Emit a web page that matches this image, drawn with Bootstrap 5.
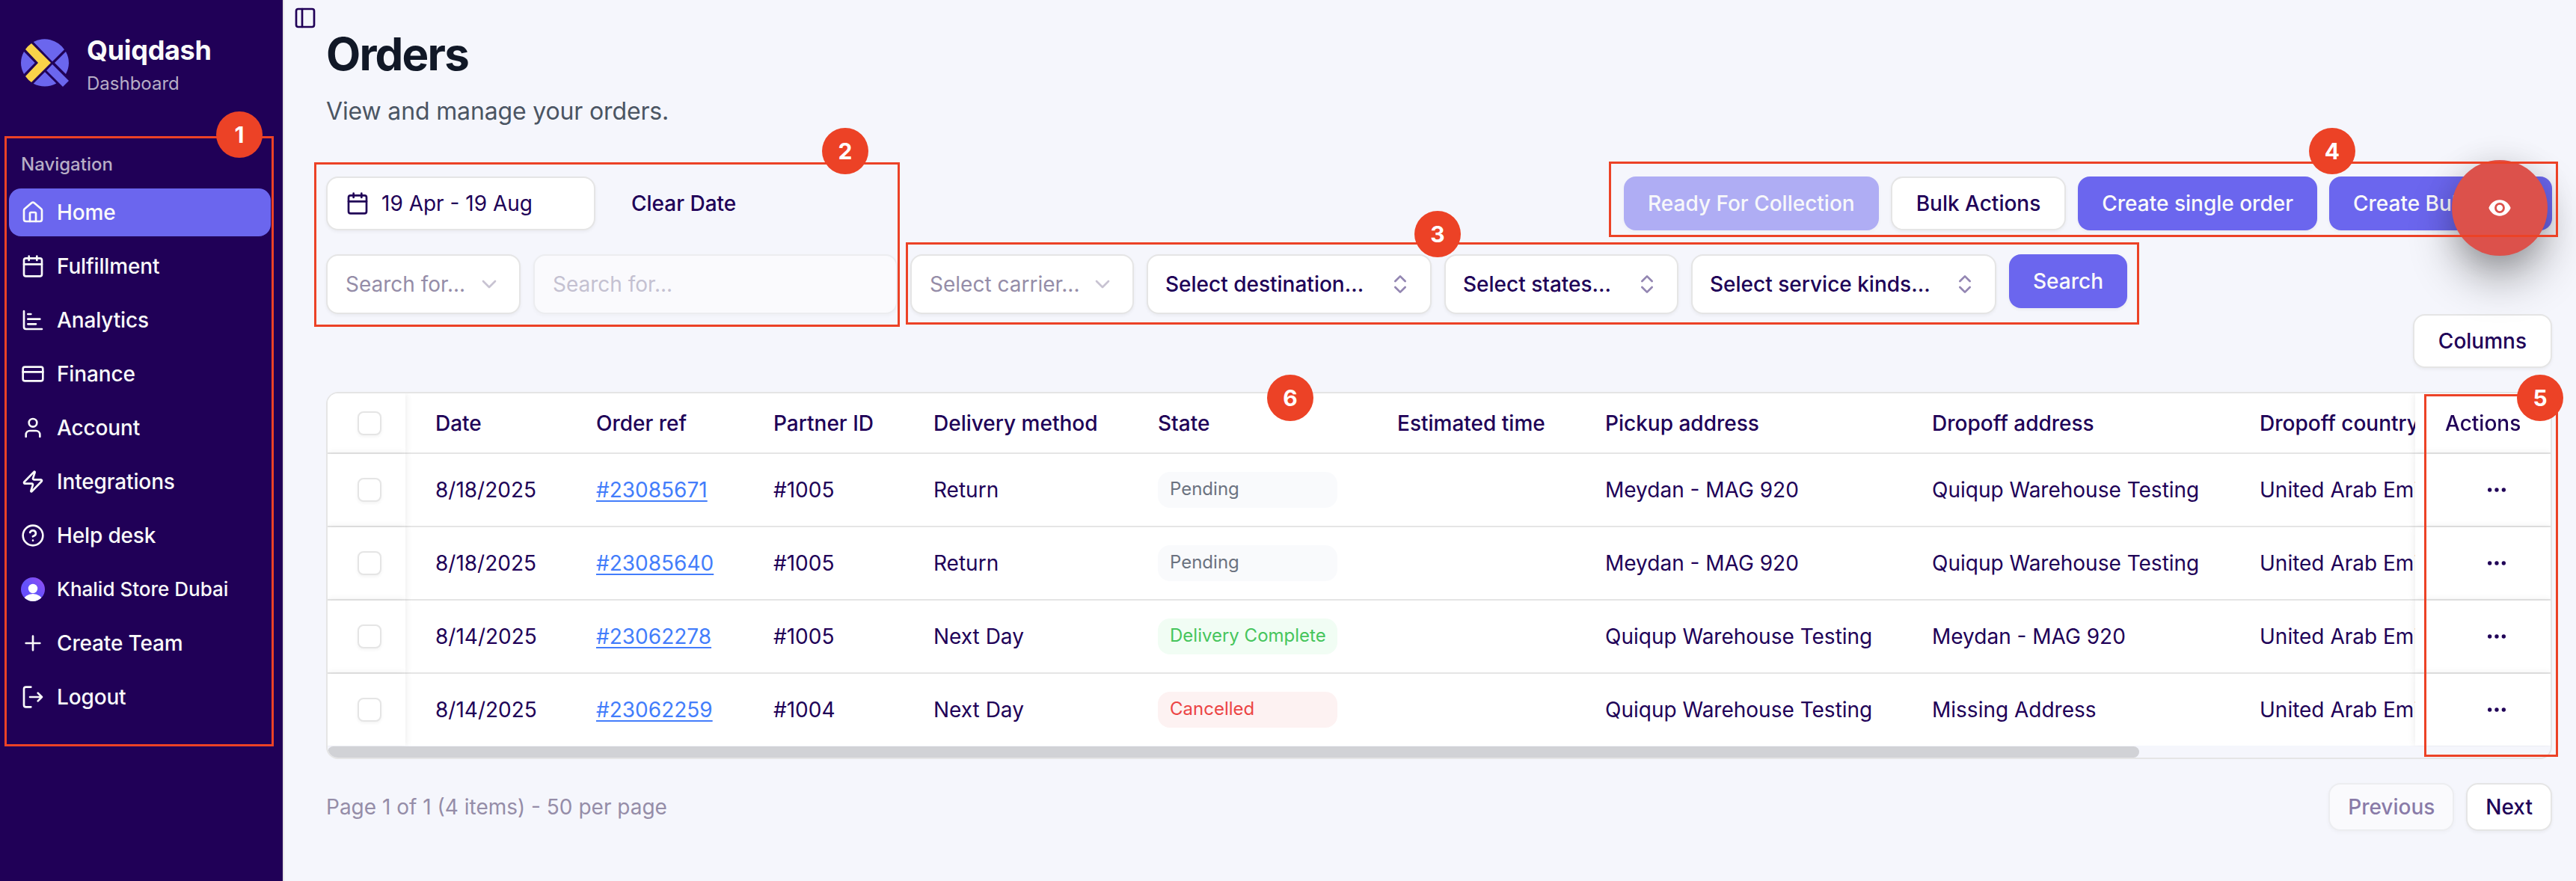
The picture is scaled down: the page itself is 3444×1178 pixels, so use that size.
<!DOCTYPE html>
<html lang="en">
<head>
<meta charset="utf-8">
<title>Quiqdash – Orders</title>
<meta name="viewport" content="width=device-width, initial-scale=1">
<link href="https://cdn.jsdelivr.net/npm/bootstrap@5.3.0/dist/css/bootstrap.min.css" rel="stylesheet">
<style>
:root{--ink:#200057;--brand:#6b66ee;--line:#e5e5e5;--page:#f5f6fc;--pin:#ec4226}
body{font-family:Inter,"Liberation Sans",sans-serif;font-size:28px;line-height:40px;color:var(--ink);background:var(--page);width:3444px;height:1178px;overflow:hidden;position:relative}
svg{display:block;flex:none}
.ico{width:32px;height:32px;fill:none;stroke:currentColor;stroke-width:2;stroke-linecap:round;stroke-linejoin:round}
.side{width:380px;height:1178px;background:var(--ink);border-right:2px solid var(--line);color:#fafafa;padding:40px 16px 0 12px}
.brand{padding:12px 0 0 16px;gap:24px;height:140px}
.brand-name{font-size:36px;font-weight:700;line-height:40px;margin-top:-5px;letter-spacing:-.3px}
.brand-sub{font-size:24px;line-height:32px;color:#b7aec6;margin-top:9px}
.nav-label{font-size:24px;line-height:32px;font-weight:500;color:#b7aec6;padding:24px 16px 16px}
.side .nav{gap:8px}
.side .nav-link{height:64px;padding:0 16px;border-radius:16px;color:#fafafa;gap:16px;font-weight:500;letter-spacing:-.15px}
.side .nav-link.active{background:var(--brand)}
.side .team{font-size:26px;letter-spacing:0}
.content{width:3064px;padding:0 32px 0 56px}
.toggle-bar{height:36px;padding-top:8px;margin-left:-44px}
h1{font-size:60px;line-height:72px;font-weight:700;letter-spacing:-1.8px;color:#111827;margin:0}
.sub{font-size:32px;line-height:48px;color:#4b5563;margin:17px 0 63px;letter-spacing:-.15px}
.ctl{height:72px;border-radius:16px;padding:0 30px;font-size:28px;font-weight:500;line-height:40px;color:var(--ink);border:2px solid transparent;white-space:nowrap;display:flex;align-items:center}
.outl{background:#fff;border-color:var(--line);box-shadow:0 2px 4px rgba(0,0,0,.05);padding:0 32px}
.prim{background:var(--brand);color:#fafafa;box-shadow:0 2px 4px rgba(0,0,0,.05)}
.faded{opacity:.5}
.field{height:80px;padding:0 24px}
.multi{padding-left:23px}
.hint{color:#958da8;font-weight:400}
.chev{color:#c8c3d2;margin-left:auto}
.updn{color:#9386b2;margin-left:auto}
.w-date{width:360px;padding:0 24px;font-weight:400;gap:16px}
.w-bulk{width:298px}
.bar-gap{gap:16px}
.filters{gap:17px;margin-top:32px}
.w-key{width:260px}.w-term{width:487px}.w-carrier{width:299px}.w-dest{width:381px}.w-states{width:313px}.w-kinds{width:408px}
.grid-box{width:2976px;height:491px;border:2px solid var(--line);border-radius:16px;overflow:hidden;margin-top:32px;background:var(--page)}
.orders{table-layout:fixed;width:3340px;border-collapse:separate;border-spacing:0;background:#fff}
.orders th,.orders td{padding:0 0 0 40px;white-space:nowrap;border-bottom:2px solid var(--line);background:#fff;vertical-align:middle}
.orders th{height:81px;font-weight:500}
.orders td{height:98px}
.orders tbody tr:last-child td{height:96px;border-bottom:0}
.scroll-x{width:2972px;overflow:hidden;height:472px}
.orders .pin-l,.orders .pin-r{position:sticky;z-index:1;box-shadow:0 0 10px rgba(0,0,0,.09)}
.orders .pin-l{left:0}
.orders .pin-r{right:0}
.tick{width:32px;height:32px;border:2px solid var(--line);border-radius:8px;box-shadow:0 2px 4px rgba(0,0,0,.05);background:#fff}
.more{margin-left:53px}
.orders a{color:#437dfb;text-decoration:underline;text-decoration-thickness:2px;text-underline-offset:4px}
.state{width:240px;height:48px;border-radius:16px;padding:8px 16px;font-size:24px;line-height:30px}
.st-p{background:#f9fafc;color:#6b7280}.st-d{background:#f1fdf4;color:#46c55c}.st-c{background:#fdf2f2;color:#ec4444}
.thumb{width:2422px;height:15px;border-radius:8px;background:#d1d2d6}
.foot{margin-top:32px;height:64px}
.foot .ctl{height:64px;padding:0 24px}
.frame{position:absolute;z-index:3;border:3px solid var(--pin)}
.pin-no{position:absolute;z-index:4;width:62px;height:62px;border-radius:50%;background:var(--pin);color:#fff;font-weight:700;font-size:30px;line-height:62px;text-align:center}
.peek{position:absolute;z-index:2;left:3278px;top:214px;width:128px;height:128px;border-radius:50%;background:#dc514b;box-shadow:0 32px 64px -8px rgba(0,0,0,.45),0 0 40px rgba(0,0,0,.1);color:#fff}
</style>
<script src="https://cdn.jsdelivr.net/npm/bootstrap@5.3.0/dist/js/bootstrap.bundle.min.js"></script>
</head>
<body>
<div class="d-flex">
  <aside class="side flex-shrink-0">
    <div class="brand d-flex">
      <svg width="64" height="64" viewBox="0 0 64 64"><g fill="#6b66ee"><path d="M16.7 4A32 32 0 0 1 58 14.3L42 30.3Z"/><path d="M60 17A32 32 0 0 1 60 47L45 32Z"/><path d="M4 17A32 32 0 0 0 4 47L18.7 32Z"/><path d="M32 44.3 47.3 59.6A32 32 0 0 1 16.7 59.8Z"/><path d="M42 34 64 56 56 64 34.2 42.2Z"/></g><path fill="#f9d349" d="M14 6 40 32 14 58Q9.500 55 6 50L23 32 6 14Q9.500 9 14 6Z"/></svg>
      <div><div class="brand-name">Quiqdash</div><div class="brand-sub">Dashboard</div></div>
    </div>
    <div class="nav-label">Navigation</div>
    <nav class="nav flex-column">
      <a href="#" class="nav-link active d-flex align-items-center"><svg class="ico" viewBox="0 0 24 24"><path d="M15 21v-8a1 1 0 0 0-1-1h-4a1 1 0 0 0-1 1v8"/><path d="M3 10a2 2 0 0 1 .709-1.528l7-5.999a2 2 0 0 1 2.582 0l7 5.999A2 2 0 0 1 21 10v9a2 2 0 0 1-2 2H5a2 2 0 0 1-2-2z"/></svg>Home</a>
      <a href="#" class="nav-link d-flex align-items-center"><svg class="ico" viewBox="0 0 24 24"><path d="M8 2v4M16 2v4M3 10h18"/><rect x="3" y="4" width="18" height="18" rx="2"/></svg>Fulfillment</a>
      <a href="#" class="nav-link d-flex align-items-center"><svg class="ico" viewBox="0 0 24 24"><path d="M3 3v16a2 2 0 0 0 2 2h16M7 6h3M7 11h12M7 16h8"/></svg>Analytics</a>
      <a href="#" class="nav-link d-flex align-items-center"><svg class="ico" viewBox="0 0 24 24"><rect x="2" y="5" width="20" height="14" rx="2"/><path d="M2 10h20"/></svg>Finance</a>
      <a href="#" class="nav-link d-flex align-items-center"><svg class="ico" viewBox="0 0 24 24"><path d="M19 21v-2a4 4 0 0 0-4-4H9a4 4 0 0 0-4 4v2"/><circle cx="12" cy="7" r="4"/></svg>Account</a>
      <a href="#" class="nav-link d-flex align-items-center"><svg class="ico" viewBox="0 0 24 24"><path d="M4 14a1 1 0 0 1-.78-1.630l9.900-10.200a.5.5 0 0 1 .86.460l-1.920 6.020A1 1 0 0 0 13 10h7a1 1 0 0 1 .78 1.630l-9.900 10.200a.5.5 0 0 1-.86-.460l1.920-6.020A1 1 0 0 0 11 14z"/></svg>Integrations</a>
      <a href="#" class="nav-link d-flex align-items-center"><svg class="ico" viewBox="0 0 24 24"><circle cx="12" cy="12" r="10"/><path d="M9.090 9a3 3 0 0 1 5.830 1c0 2-3 3-3 3M12 17h.01"/></svg>Help desk</a>
      <a href="#" class="nav-link team d-flex align-items-center"><svg width="32" height="32" viewBox="0 0 32 32"><defs><linearGradient id="av" x1="0" y1="1" x2="1" y2="0"><stop offset="0" stop-color="#6c47ff"/><stop offset=".5" stop-color="#6553fa"/><stop offset="1" stop-color="#9a4cf4"/></linearGradient><clipPath id="avc"><circle cx="16" cy="16" r="16"/></clipPath></defs><g clip-path="url(#avc)"><path fill="url(#av)" d="M0 0h32v32H0z"/><circle cx="16" cy="15" r="6.200" fill="#fff"/><ellipse cx="16" cy="31.500" rx="12.500" ry="9.500" fill="#fff"/></g></svg>Khalid Store Dubai</a>
      <a href="#" class="nav-link d-flex align-items-center"><svg class="ico" viewBox="0 0 24 24"><path d="M5 12h14M12 5v14"/></svg>Create Team</a>
      <a href="#" class="nav-link d-flex align-items-center"><svg class="ico" viewBox="0 0 24 24"><path d="M10 22H5a2 2 0 0 1-2-2V4a2 2 0 0 1 2-2h5M17 16l4-4-4-4M21 12H9"/></svg>Logout</a>
    </nav>
  </aside>

  <main class="content">
    <div class="toggle-bar"><svg class="ico" viewBox="0 0 24 24"><rect x="3" y="3" width="18" height="18" rx="2"/><path d="M9 3v18"/></svg></div>
    <h1>Orders</h1>
    <p class="sub">View and manage your orders.</p>

    <div class="d-flex justify-content-between">
      <div class="d-flex">
        <button class="btn ctl outl w-date"><svg class="ico" viewBox="0 0 24 24"><path d="M8 2v4M16 2v4M3 10h18"/><rect x="3" y="4" width="18" height="18" rx="2"/></svg>19 Apr - 19 Aug</button>
        <button class="btn ctl ms-3">Clear Date</button>
      </div>
      <div class="d-flex bar-gap">
        <button class="btn ctl prim faded">Ready For Collection</button>
        <button class="btn ctl outl">Bulk Actions</button>
        <button class="btn ctl prim">Create single order</button>
        <button class="btn ctl prim w-bulk">Create Bulk</button>
      </div>
    </div>

    <div class="filters d-flex">
      <div class="ctl field outl hint w-key">Search for...<svg class="ico chev" viewBox="0 0 24 24"><path d="m6 9 6 6 6-6"/></svg></div>
      <div class="ctl field outl hint faded w-term">Search for...</div>
      <div class="ctl field outl hint w-carrier">Select carrier...<svg class="ico chev" viewBox="0 0 24 24"><path d="m6 9 6 6 6-6"/></svg></div>
      <div class="ctl field outl multi w-dest">Select destination...<svg class="ico updn" viewBox="0 0 24 24"><path d="m7 15 5 5 5-5M7 9l5-5 5 5"/></svg></div>
      <div class="ctl field outl multi w-states">Select states...<svg class="ico updn" viewBox="0 0 24 24"><path d="m7 15 5 5 5-5M7 9l5-5 5 5"/></svg></div>
      <div class="ctl field outl multi w-kinds">Select service kinds...<svg class="ico updn" viewBox="0 0 24 24"><path d="m7 15 5 5 5-5M7 9l5-5 5 5"/></svg></div>
      <button class="btn ctl prim">Search</button>
    </div>

    <div class="d-flex justify-content-end"><button class="btn ctl outl">Columns</button></div>

    <div class="grid-box">
      <div class="scroll-x">
      <table class="orders">
        <colgroup><col style="width:104px"><col style="width:215px"><col style="width:237px"><col style="width:214px"><col style="width:300px"><col style="width:320px"><col style="width:278px"><col style="width:437px"><col style="width:438px"><col style="width:616px"><col style="width:181px"></colgroup>
        <thead><tr><th class="pin-l"><div class="tick"></div></th><th>Date</th><th>Order ref</th><th>Partner ID</th><th>Delivery method</th><th>State</th><th>Estimated time</th><th>Pickup address</th><th>Dropoff address</th><th>Dropoff country</th><th class="pin-r">Actions</th></tr></thead>
        <tbody id="rows"></tbody>
      </table>
      </div>
      <div class="thumb"></div>
    </div>

    <div class="foot d-flex justify-content-between align-items-center">
      <span class="hint">Page 1 of 1 (4 items) - 50 per page</span>
      <div class="d-flex bar-gap"><button class="btn ctl outl faded">Previous</button><button class="btn ctl outl">Next</button></div>
    </div>
  </main>
</div>

<div class="peek d-flex align-items-center justify-content-center"><svg width="32" height="32" viewBox="0 0 24 24" fill="currentColor"><path fill-rule="evenodd" d="M12 4C7 4 2.730 7.400 1 12c1.730 4.600 6 8 11 8s9.270-3.400 11-8c-1.730-4.600-6-8-11-8zm0 13.200a5.200 5.200 0 1 1 0-10.400 5.200 5.200 0 0 1 0 10.400z"/><circle cx="12" cy="12" r="3.100"/></svg></div>

<div class="frame" style="left:6px;top:182px;width:360px;height:816px"></div>
<div class="frame" style="left:420px;top:217px;width:783px;height:220px"></div>
<div class="frame" style="left:1211px;top:324px;width:1649px;height:110px"></div>
<div class="frame" style="left:2151px;top:216px;width:1269px;height:101px"></div>
<div class="frame" style="left:3241px;top:527px;width:179px;height:485px"></div>
<div class="pin-no" style="left:289px;top:149px">1</div>
<div class="pin-no" style="left:1099px;top:171px">2</div>
<div class="pin-no" style="left:1891px;top:282px">3</div>
<div class="pin-no" style="left:3087px;top:171px">4</div>
<div class="pin-no" style="left:3365px;top:501px">5</div>
<div class="pin-no" style="left:1694px;top:501px">6</div>

<script>
const orders = [
  ['8/18/2025', '#23085671', '#1005', 'Return', 'Pending', 'st-p', 'Meydan - MAG 920', 'Quiqup Warehouse Testing'],
  ['8/18/2025', '#23085640', '#1005', 'Return', 'Pending', 'st-p', 'Meydan - MAG 920', 'Quiqup Warehouse Testing'],
  ['8/14/2025', '#23062278', '#1005', 'Next Day', 'Delivery Complete', 'st-d', 'Quiqup Warehouse Testing', 'Meydan - MAG 920'],
  ['8/14/2025', '#23062259', '#1004', 'Next Day', 'Cancelled', 'st-c', 'Quiqup Warehouse Testing', 'Missing Address']
];
document.getElementById('rows').innerHTML = orders.map(o => `<tr>
  <td class="pin-l"><div class="tick"></div></td><td>${o[0]}</td><td><a href="#">${o[1]}</a></td><td>${o[2]}</td><td>${o[3]}</td>
  <td><div class="state ${o[5]}">${o[4]}</div></td><td></td><td>${o[6]}</td><td>${o[7]}</td><td>United Arab Emirates</td>
  <td class="pin-r"><svg class="ico more" viewBox="0 0 24 24"><circle cx="12" cy="12" r="1"/><circle cx="19" cy="12" r="1"/><circle cx="5" cy="12" r="1"/></svg></td></tr>`).join('');
</script>
</body>
</html>
